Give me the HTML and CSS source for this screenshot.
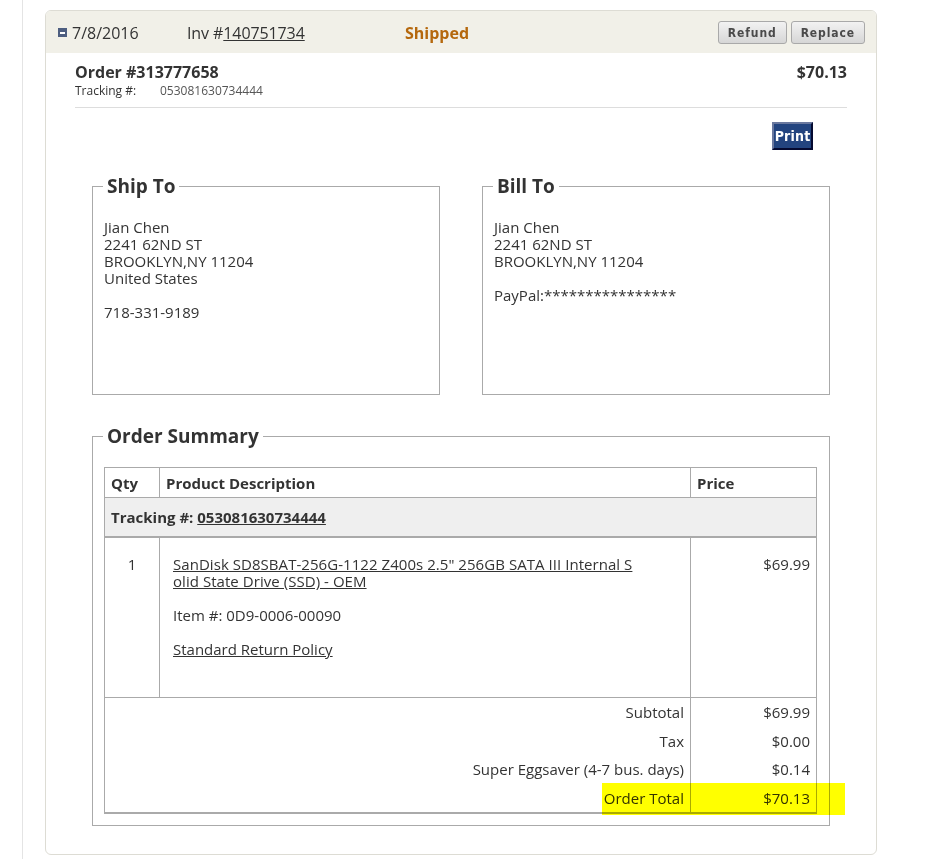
FILE: index.html
```html
<!DOCTYPE html>
<html>
<head>
<meta charset="utf-8">
<title>Order 313777658</title>
<link rel="stylesheet" href="styles.css">
</head>
<body>
<div class="page">
  <div class="order-card">
    <div class="order-head">
      <div class="col-date">
        <svg class="toggle" width="9" height="9" viewBox="0 0 9 9"><rect width="9" height="9" fill="#4d5e80"/><rect x="2" y="4" width="5" height="2" fill="#ffffff"/></svg>
        <span>7/8/2016</span>
      </div>
      <div class="col-inv">Inv #<a href="#">140751734</a></div>
      <div class="col-status">Shipped</div>
      <div class="actions">
        <button class="btn">Refund</button>
        <button class="btn">Replace</button>
      </div>
    </div>

    <div class="order-body">
      <div class="order-top">
        <div>
          <div class="order-no">Order #313777658</div>
          <div class="tracking"><span class="tlabel">Tracking #:</span><span class="tnum">053081630734444</span></div>
        </div>
        <div class="order-amt">$70.13</div>
      </div>

      <div class="print-row"><button class="print">Print</button></div>

      <div class="addr-grid">
        <fieldset class="box">
          <legend>Ship To</legend>
          <div class="addr-body">
            <div>Jian Chen</div>
            <div>2241 62ND ST</div>
            <div>BROOKLYN,NY 11204</div>
            <div>United States</div>
            <div class="gap">718-331-9189</div>
          </div>
        </fieldset>
        <fieldset class="box">
          <legend>Bill To</legend>
          <div class="addr-body">
            <div>Jian Chen</div>
            <div>2241 62ND ST</div>
            <div>BROOKLYN,NY 11204</div>
            <div class="gap">PayPal:****************</div>
          </div>
        </fieldset>
      </div>

      <fieldset class="box summary-box">
        <legend>Order Summary</legend>
        <table class="summary">
          <colgroup><col class="w-qty"><col><col class="w-price"></colgroup>
          <thead>
            <tr><th>Qty</th><th>Product Description</th><th>Price</th></tr>
          </thead>
          <tbody>
            <tr class="trk-row"><td colspan="3">Tracking #: <a href="#">053081630734444</a></td></tr>
            <tr class="item-row">
              <td class="qty">1</td>
              <td class="desc">
                <div class="desc-link"><a href="#">SanDisk SD8SBAT-256G-1122 Z400s 2.5" 256GB SATA III Internal Solid State Drive (SSD) - OEM</a></div>
                <div class="desc-line">Item #: 0D9-0006-00090</div>
                <div class="desc-line"><a href="#">Standard Return Policy</a></div>
              </td>
              <td class="num">$69.99</td>
            </tr>
            <tr class="tot"><td colspan="2" class="lbl">Subtotal</td><td class="num">$69.99</td></tr>
            <tr class="tot"><td colspan="2" class="lbl">Tax</td><td class="num">$0.00</td></tr>
            <tr class="tot"><td colspan="2" class="lbl">Super Eggsaver (4-7 bus. days)</td><td class="num">$0.14</td></tr>
            <tr class="tot last"><td colspan="2" class="lbl">Order Total</td><td class="num">$70.13</td></tr>
          </tbody>
        </table>
      </fieldset>
    </div>

    <div class="highlight"></div>
  </div>
</div>
</body>
</html>
```

FILE: styles.css
```css
html, body {
  margin: 0;
  padding: 0;
  background: #ffffff;
}

body {
  font-family: "Open Sans", "Liberation Sans", sans-serif;
  color: #333333;
  font-size: 15px;
  line-height: 17px;
}

a {
  color: #333333;
  text-decoration: underline;
}

.page {
  margin-left: 22px;
  border-left: 1px solid #e4e4e4;
  min-height: 859px;
  box-sizing: border-box;
  padding: 10px 0 0 22px;
}

.order-card {
  position: relative;
  width: 832px;
  box-sizing: border-box;
  border: 1px solid #dddcd4;
  border-radius: 6px;
}

/* header */
.order-head {
  display: flex;
  align-items: center;
  height: 42px;
  padding: 1px 11px 0 12px;
  box-sizing: border-box;
  background: #f1f0e8;
  border-radius: 5px 5px 0 0;
  font-size: 16px;
  line-height: 22px;
}

.col-date {
  display: flex;
  align-items: center;
  width: 129px;
}

.toggle {
  display: block;
  margin-right: 5px;
}

.col-inv {
  width: 218px;
  letter-spacing: -0.1px;
}

.col-status {
  font-weight: 700;
  color: #b5680d;
}

.actions {
  margin-left: auto;
  display: flex;
  gap: 4px;
}

.btn {
  height: 23px;
  padding: 0 9px;
  border: 1px solid #a9a9a9;
  border-radius: 3px;
  background: linear-gradient(#f2f2f2, #d6d6d6);
  font-family: "DejaVu Sans Condensed", "DejaVu Sans", sans-serif;
  font-stretch: condensed;
  font-weight: 700;
  font-size: 12px;
  letter-spacing: 0.9px;
  color: #4a4a4a;
}

/* body */
.order-body {
  padding: 8px 29px 28px 29px;
}

.order-top {
  display: flex;
  justify-content: space-between;
  padding-bottom: 8px;
  border-bottom: 1px solid #dddddd;
}

.order-no,
.order-amt {
  font-size: 16px;
  line-height: 22px;
  font-weight: 700;
}

.tracking {
  font-size: 12px;
  line-height: 16px;
}

.tlabel {
  display: inline-block;
  width: 85px;
}

.tnum {
  color: #555555;
}

.print-row {
  display: flex;
  justify-content: flex-end;
  padding-right: 34px;
  margin-top: 14px;
}

.print {
  height: 28px;
  width: 41px;
  padding: 0;
  background: #23447f;
  border-style: solid;
  border-width: 2px;
  border-color: #6a789e #050a30 #050a30 #6a789e;
  color: #ffffff;
  font-family: "DejaVu Sans Condensed", "DejaVu Sans", sans-serif;
  font-stretch: condensed;
  font-weight: 700;
  font-size: 14px;
  letter-spacing: 0.2px;
}

/* address boxes */
.addr-grid {
  display: grid;
  grid-template-columns: 1fr 1fr;
  gap: 42px;
  margin: 23px 17px 0 17px;
}

.box {
  margin: 0;
  min-width: 0;
  border: 1px solid #aaaaaa;
  padding: 0 10px;
}

.box legend {
  padding: 0 4px;
  font-size: 19px;
  line-height: 27px;
  font-weight: 700;
  color: #333333;
}

.addr-body {
  box-sizing: border-box;
  height: 194px;
  padding: 19px 0 0 1px;
}

.gap {
  margin-top: 17px;
}

/* order summary */
.summary-box {
  margin: 28px 17px 0 17px;
  padding: 0 12px 11px 11px;
}

.summary-box legend {
  margin-left: -1px;
}

.summary {
  width: 100%;
  margin-top: 17px;
  border-collapse: collapse;
  border: 1px solid #aaaaaa;
  border-bottom-width: 2px;
}

.w-qty {
  width: 55px;
}

.w-price {
  width: 126px;
}

.summary th {
  text-align: left;
  font-weight: 700;
  line-height: 20px;
  padding: 5px 6px 4px;
  border: 1px solid #aaaaaa;
}

.trk-row td {
  background: #efefef;
  font-weight: 700;
  line-height: 20px;
  padding: 9px 6px 9px;
  border-bottom: 2px solid #aaaaaa;
}

.item-row td {
  vertical-align: top;
  padding: 18px 6px 39px;
  border: 1px solid #aaaaaa;
  border-top: none;
}

.item-row .qty {
  text-align: center;
}

.item-row .desc {
  padding-left: 13px;
}

.desc-link {
  width: 463px;
  word-break: break-all;
  letter-spacing: 0.05px;
}

.desc-line {
  margin-top: 17px;
}

.num {
  text-align: right;
}

.tot td {
  padding: 6px 6px 5.5px;
}

.tot .lbl {
  text-align: right;
}

.tot .num {
  border-left: 1px solid #aaaaaa;
}

.highlight {
  position: absolute;
  left: 556px;
  top: 772px;
  width: 243px;
  height: 32px;
  background: #ffff00;
  mix-blend-mode: multiply;
  pointer-events: none;
}
```
